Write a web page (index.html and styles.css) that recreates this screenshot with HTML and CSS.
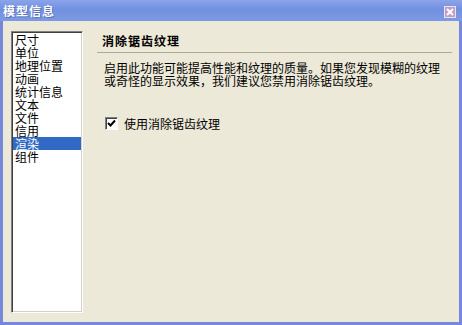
FILE: index.html
```html
<!DOCTYPE html>
<html lang="zh-CN">
<head>
  <meta charset="UTF-8" />
  <title>模型信息</title>
  <link rel="stylesheet" href="styles.css">
</head>
<body>
  <div class="window">
    <div class="titlebar">
      <span class="title">模型信息</span>
      <span class="close">
        <svg width="10" height="10" viewBox="0 0 10 10">
          <path d="M2 2 L8 8 M8 2 L2 8" stroke="#fff" stroke-width="2" />
        </svg>
      </span>
    </div>
    <div class="body">
      <ul class="list">
        <li>尺寸</li>
        <li>单位</li>
        <li>地理位置</li>
        <li>动画</li>
        <li>统计信息</li>
        <li>文本</li>
        <li>文件</li>
        <li>信用</li>
        <li class="selected">渲染</li>
        <li>组件</li>
      </ul>
      <div class="panel">
        <h2>消除锯齿纹理</h2>
        <p>启用此功能可能提高性能和纹理的质量。如果您发现模糊的纹理或奇怪的显示效果，我们建议您禁用消除锯齿纹理。</p>
        <label class="check">
          <span class="box">
            <svg width="9" height="9" viewBox="0 0 9 9">
              <path d="M1 4 L3.5 6.5 L8 1.5" stroke="#000" stroke-width="2" fill="none" />
            </svg>
          </span>
          使用消除锯齿纹理
        </label>
      </div>
    </div>
  </div>
</body>
</html>
```

FILE: styles.css
```css
body {
  margin: 0;
  font-family: "Noto Sans CJK SC", "Noto Sans", sans-serif;
  font-size: 12px;
  color: #000;
}
.window {
  width: 462px;
  height: 325px;
  box-sizing: border-box;
  display: flex;
  flex-direction: column;
  background: #7688dc;
}
.titlebar {
  height: 21px;
  display: flex;
  align-items: center;
  justify-content: space-between;
  padding: 0 6px 0 3px;
  background: linear-gradient(#8ba4ea, #7190e0 45%, #7d9ae4);
}
.title {
  color: #fff;
  font-weight: bold;
  font-size: 12px;
  letter-spacing: 1px;
  text-shadow: 1px 1px 0 #5a6fb8;
}
.close {
  width: 12px;
  height: 12px;
  box-sizing: border-box;
  border: 1px solid #e8e4f4;
  background: #c19dc6;
  display: flex;
  align-items: center;
  justify-content: center;
  margin-top: 2px;
}
.body {
  flex: 1;
  margin: 0 3px 3px 3px;
  background: #ece9d8;
  display: flex;
  padding: 10px 7px 9px 8px;
}
.list {
  list-style: none;
  margin: 0;
  padding: 1px 1px;
  width: 72px;
  box-sizing: border-box;
  background: #fff;
  border: 1px solid;
  border-color: #808080 #fff #fff #808080;
  box-shadow: inset 1px 1px 0 #404040, inset -1px -1px 0 #d4d0c8;
}
.list li {
  line-height: 13px;
  height: 13px;
  padding-left: 2px;
  white-space: nowrap;
}
.list li.selected {
  background: #316ac5;
  color: #fff;
}
.panel {
  flex: 1;
  margin-left: 14px;
}
.panel h2 {
  margin: 0;
  font-size: 12px;
  font-weight: bold;
  letter-spacing: 1px;
  padding: 4px 0 5px 5px;
  border-bottom: 1px solid #aca899;
  line-height: 12px;
}
.panel p {
  margin: 8px 0 0 7px;
  width: 340px;
  line-height: 13px;
}
.check {
  display: flex;
  align-items: center;
  gap: 6px;
  margin: 28px 0 0 8px;
}
.box {
  width: 13px;
  height: 13px;
  box-sizing: border-box;
  background: #fff;
  border: 1px solid;
  border-color: #808080 #fff #fff #808080;
  box-shadow: inset 1px 1px 0 #404040;
  display: flex;
  align-items: center;
  justify-content: center;
}
```
